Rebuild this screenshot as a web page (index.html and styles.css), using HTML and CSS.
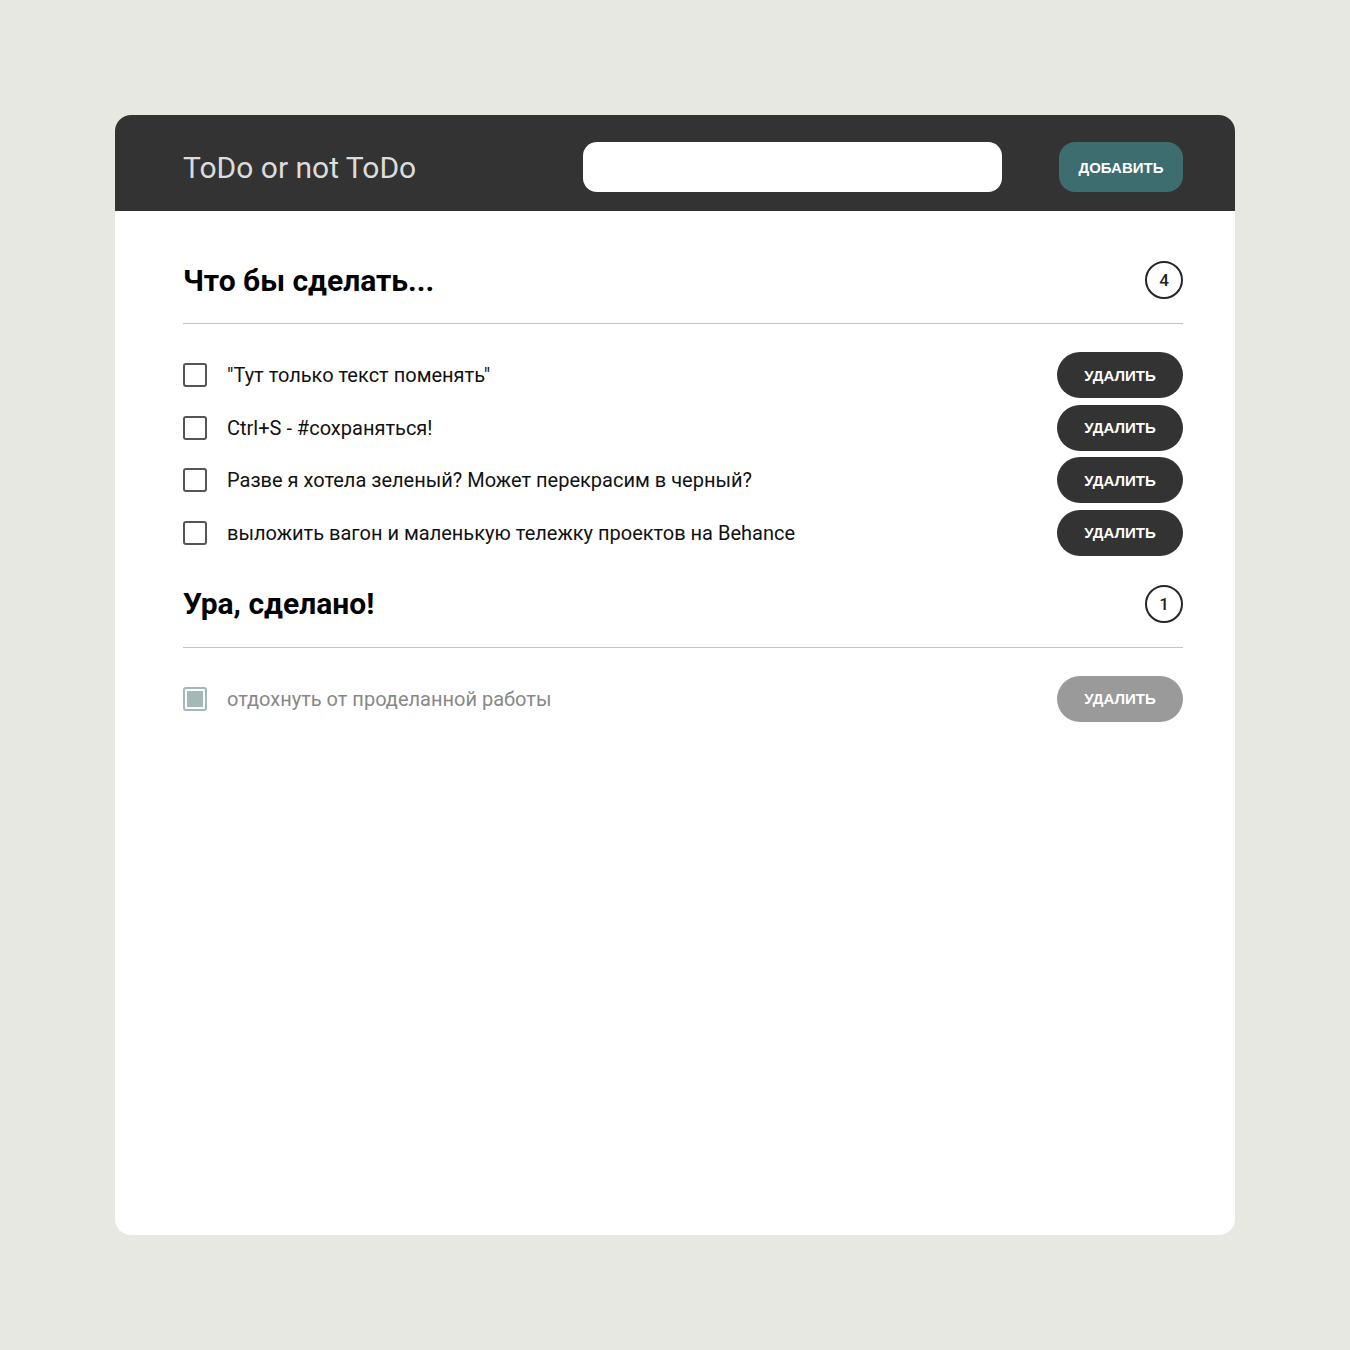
FILE: index.html
```html
<!DOCTYPE html>
<html lang="ru">
<head>
<meta charset="utf-8">
<title>ToDo or not ToDo</title>
<link rel="stylesheet" href="styles.css">
</head>
<body>
<div class="page">
  <div class="card">
    <header class="header">
      <h1 class="title">ToDo or not ToDo</h1>
      <input class="new-input" type="text">
      <button class="add-btn">ДОБАВИТЬ</button>
    </header>
    <main class="main">
      <section class="section">
        <div class="section-head">
          <h2 class="section-title">Что бы сделать...</h2>
          <span class="counter">4</span>
        </div>
        <ul class="list">
          <li class="item"><span class="check"></span><span class="text">"Тут только текст поменять"</span><button class="del-btn">УДАЛИТЬ</button></li>
          <li class="item"><span class="check"></span><span class="text">Ctrl+S - #сохраняться!</span><button class="del-btn">УДАЛИТЬ</button></li>
          <li class="item"><span class="check"></span><span class="text">Разве я хотела зеленый? Может перекрасим в черный?</span><button class="del-btn">УДАЛИТЬ</button></li>
          <li class="item"><span class="check"></span><span class="text">выложить вагон и маленькую тележку проектов на Behance</span><button class="del-btn">УДАЛИТЬ</button></li>
        </ul>
      </section>
      <section class="section section-done">
        <div class="section-head">
          <h2 class="section-title">Ура, сделано!</h2>
          <span class="counter">1</span>
        </div>
        <ul class="list">
          <li class="item done"><span class="check checked"></span><span class="text">отдохнуть от проделанной работы</span><button class="del-btn">УДАЛИТЬ</button></li>
        </ul>
      </section>
    </main>
  </div>
</div>
</body>
</html>
```
FILE: styles.css
```css
* { box-sizing: border-box; }
html, body { margin: 0; padding: 0; }
body {
  background: #e8e8e3;
  font-family: Roboto, "Noto Sans", sans-serif;
}
.page {
  padding: 115px 115px;
}
.card {
  width: 1120px;
  height: 1120px;
  background: #fff;
  border-radius: 16px;
  overflow: hidden;
}
.header {
  height: 96px;
  background: #333333;
  display: flex;
  align-items: center;
  padding: 8px 52px 0 68px;
}
.title {
  margin: 0;
  font-weight: 400;
  font-size: 30px;
  color: #dcdcdc;
  width: 400px;
}
.new-input {
  width: 419px;
  height: 50px;
  border: none;
  border-radius: 14px;
  background: #fff;
  outline: none;
}
.add-btn {
  margin-left: auto;
  width: 124px;
  height: 50px;
  border: none;
  border-radius: 16px;
  background: #3e6d70;
  color: #fff;
  font-family: "Liberation Sans", Arial, sans-serif;
  font-weight: 700;
  font-size: 15px;
  padding: 0;
}
.main {
  padding: 50px 52px 0 68px;
}
.section-done { margin-top: 29px; }
.section-head {
  height: 38px;
  display: flex;
  align-items: center;
  justify-content: space-between;
  margin-bottom: 24px;
}
.section-title {
  margin: 0;
  font-size: 30px;
  font-weight: 700;
  color: #000;
}
.counter {
  width: 38px;
  height: 38px;
  border: 2px solid #262626;
  border-radius: 50%;
  display: flex;
  align-items: center;
  justify-content: center;
  font-size: 17px;
  font-weight: 500;
  color: #222;
}
.list {
  list-style: none;
  margin: 0;
  padding: 28px 0 0;
  border-top: 1px solid #c4c4c4;
  display: flex;
  flex-direction: column;
  gap: 6.5px;
}
.item {
  height: 46px;
  display: flex;
  align-items: center;
}
.check {
  width: 24px;
  height: 24px;
  border: 2px solid #555;
  border-radius: 3px;
  flex: none;
}
.check.checked {
  border-color: #a3b8b9;
  padding: 2px;
  background: #a3b8b9;
  background-clip: content-box;
  box-shadow: inset 0 0 0 2px #fff;
}
.text {
  margin-left: 20px;
  font-size: 20px;
  color: #111;
  flex: 1;
}
.done .text { color: #888; }
.del-btn {
  width: 126px;
  height: 46px;
  border: none;
  border-radius: 23px;
  background: #333;
  color: #fff;
  font-family: "Liberation Sans", Arial, sans-serif;
  font-weight: 700;
  font-size: 15px;
  padding: 0;
}
.done .del-btn { background: #9a9a9a; }
```
